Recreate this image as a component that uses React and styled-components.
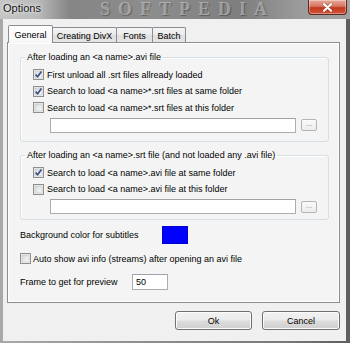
import React from "react";
import styled, { createGlobalStyle } from "styled-components";

const GlobalStyle = createGlobalStyle`
  html, body {
    margin: 0;
    padding: 0;
  }
  body {
    width: 350px;
    height: 343px;
    overflow: hidden;
    font-family: "Liberation Sans", Arial, sans-serif;
    font-size: 9px;
    color: #000;
  }
`;

const Window = styled.div`
  width: 350px;
  height: 343px;
  box-sizing: border-box;
  display: flex;
  flex-direction: column;
  background: linear-gradient(90deg, #a9a9a9 0, #8f8f8f 40%, #7a7a7a 80%, #5e5e5e 100%);
`;

const TitleBar = styled.div`
  position: relative;
  height: 19px;
  flex: none;
  display: flex;
  justify-content: space-between;
  align-items: flex-start;
  background: linear-gradient(
    90deg,
    #c6c6c6 0,
    #bababa 38px,
    #858585 70px,
    #8d8d8d 150px,
    #7e7e7e 240px,
    #9b9b9b 300px,
    #a3a3a3 350px
  );
`;

const Title = styled.span`
  position: relative;
  z-index: 1;
  font-size: 11px;
  line-height: 11px;
  padding: 3px 0 0 3px;
  color: #111;
  text-shadow: 0 0 5px rgba(255, 255, 255, 0.9), 0 0 2px rgba(255, 255, 255, 0.8);
`;

const Watermark = styled.span`
  position: absolute;
  left: 100px;
  top: 0;
  font-family: "Liberation Serif", "Times New Roman", serif;
  font-weight: bold;
  font-size: 18px;
  line-height: 19px;
  letter-spacing: 8px;
  color: rgba(215, 215, 215, 0.5);
  text-shadow: 1px 1px 1px rgba(0, 0, 0, 0.3);
  pointer-events: none;
`;

const CloseButton = styled.div`
  position: relative;
  z-index: 1;
  width: 39px;
  height: 15px;
  margin-right: 3px;
  box-sizing: border-box;
  border: 1px solid #5b2a1f;
  border-top: none;
  border-radius: 0 0 4px 4px;
  background: linear-gradient(#e9a99a 0%, #d57662 45%, #c4381f 55%, #d2543a 100%);
  box-shadow: inset 0 0 0 1px rgba(255, 255, 255, 0.35);
  display: flex;
  align-items: center;
  justify-content: center;
`;

const Client = styled.div`
  flex: 1;
  margin: 0 4px 2px 3px;
  background: #f0f0f0;
  display: flex;
  flex-direction: column;
  padding: 6px 6px 0 4px;
  box-sizing: border-box;
`;

const TabStrip = styled.div`
  display: flex;
  align-items: flex-end;
  padding-left: 1px;
  margin-bottom: -1px;
  position: relative;
  z-index: 1;
`;

const Tab = styled.div`
  box-sizing: border-box;
  width: ${(p) => p.$w}px;
  height: ${(p) => (p.$active ? 18 : 15)}px;
  margin-bottom: ${(p) => (p.$active ? 0 : 1)}px;
  margin-left: -1px;
  border: 1px solid #8a8d94;
  border-bottom: none;
  border-radius: 2px 2px 0 0;
  display: flex;
  align-items: center;
  justify-content: center;
  padding-top: ${(p) => (p.$active ? 0 : 1)}px;
  background: ${(p) =>
    p.$active
      ? "linear-gradient(#ffffff, #f6f6f6)"
      : "linear-gradient(#f4f4f4 0%, #ebebeb 50%, #dedede 51%, #e6e6e6 100%)"};
  position: relative;
  z-index: ${(p) => (p.$active ? 2 : 1)};

  &:first-child {
    margin-left: 0;
  }
`;

const Panel = styled.div`
  height: 261px;
  box-sizing: border-box;
  border: 1px solid #8a8d94;
  box-shadow: inset 1px 1px 0 #fff, inset -1px -1px 0 #fff;
  background: #f4f4f4;
  display: flex;
  flex-direction: column;
  padding: 8.5px 10px 0 12px;
`;

const Group = styled.fieldset`
  margin: ${(p) => p.$top}px 0 0 0;
  padding: 4px 11px ${(p) => p.$bottom}px 12px;
  border: 1px solid #d5dfe5;
  border-radius: 3px;
  box-shadow: inset 1px 1px 0 #fff;
  min-width: 0;
`;

const Legend = styled.legend`
  font-size: 9px;
  line-height: 11px;
  padding: 0 2px;
  margin-left: -8px;
`;

const CheckRow = styled.div`
  height: 16.5px;
  display: flex;
  align-items: center;
  gap: 3px;
`;

const InputRow = styled.div`
  height: 16px;
  margin: 1px 0 0 17px;
  display: flex;
  align-items: center;
  gap: 5px;
`;

const TextBox = styled.div`
  box-sizing: border-box;
  width: ${(p) => p.$w}px;
  height: ${(p) => p.$h}px;
  background: #fff;
  border: 1px solid #abadb3;
  border-top-color: #a0a2a8;
  display: flex;
  align-items: center;
  padding-left: 3px;
`;

const BrowseButton = styled.div`
  box-sizing: border-box;
  width: 16px;
  height: 12px;
  border: 1px solid #b4b4b4;
  border-radius: 2px;
  background: linear-gradient(#fafafa, #ececec);
  color: #8a8a8a;
  font-size: 8px;
  line-height: 8px;
  text-align: center;
`;

const OptionRow = styled.div`
  height: ${(p) => p.$h}px;
  margin-top: ${(p) => p.$top}px;
  display: flex;
  align-items: center;
  gap: ${(p) => p.$gap || 0}px;
`;

const FieldLabel = styled.span`
  width: ${(p) => p.$w}px;
  flex: none;
`;

const ColorSwatch = styled.div`
  width: 26px;
  height: 18px;
  box-sizing: border-box;
  background: #0000ff;
  border: 1px solid #0000c8;
`;

const ButtonRow = styled.div`
  display: flex;
  justify-content: flex-end;
  gap: 10px;
  margin-top: 8px;
`;

const Button = styled.div`
  box-sizing: border-box;
  width: ${(p) => p.$w}px;
  height: 19px;
  border: 1px solid #707070;
  border-radius: 3px;
  background: linear-gradient(#f2f2f2 0%, #ebebeb 48%, #dddddd 52%, #cfcfcf 100%);
  box-shadow: inset 0 0 0 1px #fbfbfb;
  display: flex;
  align-items: center;
  justify-content: center;
  font-size: 9px;
`;

const Check = ({ checked }) => (
  <svg width="11" height="11" viewBox="0 0 11 11" style={{ flex: "none" }}>
    <defs>
      <linearGradient id="cbg" x1="0" y1="0" x2="1" y2="1">
        <stop offset="0" stopColor="#d9d9d9" />
        <stop offset="1" stopColor="#fbfbfb" />
      </linearGradient>
    </defs>
    <rect x="0.5" y="0.5" width="10" height="10" fill="#f4f4f4" stroke="#8e8f8f" />
    <rect x="2" y="2" width="7" height="7" fill="url(#cbg)" stroke="#b9bcc1" strokeWidth="0.6" />
    {checked && (
      <path
        d="M2.6 5.6 L4.6 7.8 L8.4 2.6"
        fill="none"
        stroke="#3b4f85"
        strokeWidth="1.7"
        strokeLinejoin="round"
      />
    )}
  </svg>
);

const CheckOption = ({ checked, children }) => (
  <CheckRow>
    <Check checked={checked} />
    <span>{children}</span>
  </CheckRow>
);

const PathInput = () => (
  <InputRow>
    <TextBox $w={246} $h={15} />
    <BrowseButton>...</BrowseButton>
  </InputRow>
);

const tabs = [
  { label: "General", w: 45, active: true },
  { label: "Creating DivX", w: 65 },
  { label: "Fonts", w: 37 },
  { label: "Batch", w: 34 },
];

export default function App() {
  return (
    <>
      <GlobalStyle />
      <Window>
        <TitleBar>
          <Title>Options</Title>
          <Watermark>SOFTPEDIA</Watermark>
          <CloseButton>
            <svg width="11" height="9" viewBox="0 0 11 9">
              <path
                d="M2 1.2 L9 7.8 M9 1.2 L2 7.8"
                stroke="#3a1a14"
                strokeWidth="3.2"
                strokeLinecap="round"
                opacity="0.35"
              />
              <path
                d="M2 1.2 L9 7.8 M9 1.2 L2 7.8"
                stroke="#fff"
                strokeWidth="2.2"
                strokeLinecap="round"
              />
            </svg>
          </CloseButton>
        </TitleBar>
        <Client>
          <TabStrip>
            {tabs.map((t) => (
              <Tab key={t.label} $w={t.w} $active={t.active}>
                {t.label}
              </Tab>
            ))}
          </TabStrip>
          <Panel>
            <Group $top={0} $bottom={8}>
              <Legend>After loading an &lt;a name&gt;.avi file</Legend>
              <CheckOption checked>First unload all .srt files allready loaded</CheckOption>
              <CheckOption checked>Search to load &lt;a name&gt;*.srt files at same folder</CheckOption>
              <CheckOption>Search to load &lt;a name&gt;*.srt files at this folder</CheckOption>
              <PathInput />
            </Group>
            <Group $top={7.5} $bottom={4.5}>
              <Legend>After loading an &lt;a name&gt;.srt file (and not loaded any .avi file)</Legend>
              <CheckOption checked>Search to load &lt;a name&gt;.avi file at same folder</CheckOption>
              <CheckOption>Search to load &lt;a name&gt;.avi file at this folder</CheckOption>
              <PathInput />
            </Group>
            <OptionRow $h={18} $top={5.5}>
              <FieldLabel $w={142}>Background color for subtitles</FieldLabel>
              <ColorSwatch />
            </OptionRow>
            <OptionRow $h={16} $top={7} $gap={2}>
              <Check />
              <span>Auto show avi info (streams) after opening an avi file</span>
            </OptionRow>
            <OptionRow $h={16} $top={7}>
              <FieldLabel $w={112}>Frame to get for preview</FieldLabel>
              <TextBox $w={36} $h={16}>50</TextBox>
            </OptionRow>
          </Panel>
          <ButtonRow>
            <Button $w={77}>Ok</Button>
            <Button $w={78}>Cancel</Button>
          </ButtonRow>
        </Client>
      </Window>
    </>
  );
}
